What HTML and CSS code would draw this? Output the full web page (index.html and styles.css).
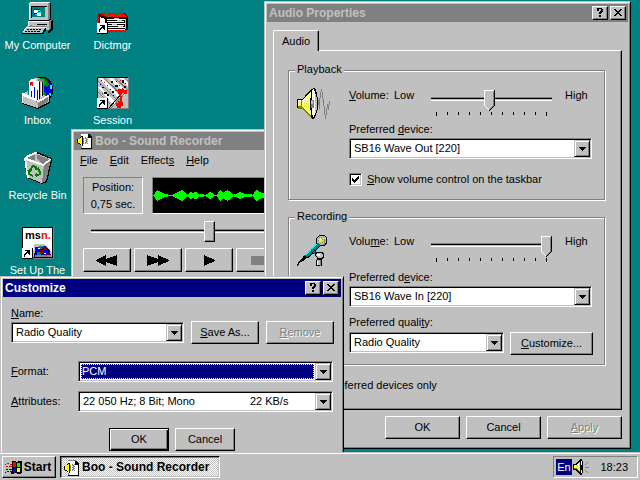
FILE: index.html
```html
<!DOCTYPE html>
<html lang="en">
<head>
<meta charset="utf-8">
<title>Desktop</title>
<link rel="stylesheet" href="styles.css">
</head>
<body>
<svg class="defs" aria-hidden="true">
  <symbol id="help" viewBox="0 0 8 9"><path d="M1 0h5v1h1v3h-1v1h-1v1h-2v-2h1v-1h1v-2h-2v2h-2v-2h0zM3 7h2v2h-2z"/></symbol>
  <symbol id="close" viewBox="0 0 8 7"><path d="M0 0h2v1h1v1h2v-1h1v-1h2v1h-1v1h-1v1h-1v1h1v1h1v1h1v1h-2v-1h-1v-1h-2v1h-1v1h-2v-1h1v-1h1v-1h1v-1h-1v-1h-1v-1h-1z"/></symbol>
  <symbol id="drop" viewBox="0 0 7 4"><path d="M0 0h7v1h-1v1h-1v1h-1v1h-1v-1h-1v-1h-1v-1h-1z"/></symbol>
  <symbol id="arrow" viewBox="0 0 11 11">
    <path fill="#000" d="M0 0h11v11h-11z"/><path fill="#fff" d="M0 0h10v10h-10z"/>
    <path d="M3 2h5v5h-1v-1h-1v-1h-1v1h-1v1h-1v2h-1v-3h1v-1h1v-1h1v-1h-2z"/>
  </symbol>
  <symbol id="wavfile" viewBox="0 0 16 16">
    <path fill="#fff" d="M4 1h8l3 3v11h-11z"/>
    <path fill="#808080" d="M4 0h8v1h-8zM4 13h1v2h-1z"/>
    <path d="M12 1h1v1h1v1h1v13h-11v-1h10v-10h-3v-4h1z"/>
    <path fill="#ff0" d="M1 6h2v-1h1v-1h1v8h-1v-1h-1v-1h-2z"/>
    <path d="M5 3h1v10h-1zM4 3h1v1h-1zM3 4h1v1h-1zM0 6h1v4h-1zM3 11h1v1h-1zM1 10h2v1h-2z"/>
    <path fill="#808080" d="M6 5h1v6h-1zM8 4h1v1h1v-1h1v1h-1v1h1v1h-1v1h1v1h-1v1h1v1h-1v-1h-1v1h-1v-2h1v-1h-1v-1h1v-1h-1z"/>
  </symbol>
</svg>

<main class="desktop">
  <nav class="shortcuts" aria-label="Desktop">
    <a class="shortcut" href="#computer">
      <svg viewBox="0 0 32 32">
        <path fill="#c0c0c0" d="M7 1h19l2-1v17h-2v2h-19z"/><path fill="#fff" d="M7 1l2-1h18l-1 1h-18v17h-1z"/>
        <path fill="#808080" d="M26 1h2v16l-2 2z"/><path d="M28 1h1v17h-2v1h-20v-1h19l2-1zM9 4h16v12h-16z"/>
        <path fill="teal" d="M10 5h14v10h-14z"/><path fill="#c0c0c0" d="M23 5h2v11h-15v-1h13z"/>
        <path fill="#00f" d="M12 7h6v6h-6z"/><path fill="#fff" d="M12 8h4v3h-4zM15 10h4v4h-4z"/><path fill="#0ff" d="M16 8h2v1h-2zM13 12h2v1h-2zM15 10h4v1h-4z"/>
        <path fill="#c0c0c0" d="M6 19h22v9h-25l3-5z"/><path fill="#fff" d="M6 19h22v1h-21v4h-1z"/><path fill="#808080" d="M28 18h2v8l-3 3v-9zM7 24h18v1h-18z"/>
        <path d="M30 18h1v9l-4 4h-1v-1l3-4v-7zM15 22h10v1h-10z"/><path fill="#0f0" d="M8 23h2v1h-2z"/>
        <path fill="#c0c0c0" d="M4 25h19l-3 6h-19z"/><path fill="#fff" d="M4 25h20v1h-20l-2 4h-1z"/>
        <path d="M0 31h22v1h-22zM21 30l3-5v3l-3 4zM5 27h2v1h-2zM8 27h2v1h-2zM11 27h2v1h-2zM14 27h2v1h-2zM17 27h2v1h-2zM3 29h2v1h-2zM6 29h2v1h-2zM9 29h2v1h-2zM12 29h2v1h-2zM15 29h3v1h-3z"/>
      </svg><span>My Computer</span></a>
    <a class="shortcut" href="#dictmgr">
      <svg viewBox="0 0 32 32">
        <path d="M1 11h26l4 3v14h-2v2h-18v-9h-10z"/><path fill="#f00" d="M1 11h25l4 4h-22l-7-3zM8 28h21v2h-19zM0 13h2v8h-2z"/>
        <path fill="#fff" d="M3 15l5 2v11h-1l-4-3zM10 17h18v1h-18zM10 19h17v1h-17zM10 21h18v1h-18zM10 23h17v1h-17zM10 25h18v1h-18zM11 27h17v1h-17z"/>
        <path fill="#c0c0c0" d="M28 17h1v10h-1zM17 16h5v1h-5zM20 18h5v1h-5zM15 22h5v1h-5zM21 24h5v1h-5z"/>
        <path fill="#800000" d="M2 12h2l6 3h-2z"/><path fill="#0a0" d="M8 12h3v1h-3zM14 13h3v1h-3zM19 12h2v1h-2zM22 13h2v1h-2zM11 14h2v1h-2z"/>
        <use href="#arrow" x="0" y="21" width="11" height="11"/>
      </svg><span>Dictmgr</span></a>
    <a class="shortcut" href="#inbox">
      <svg viewBox="0 0 32 32">
        <path d="M16 0h7l3 2 3 3 2 5v6l-2 5-4 3h-9z"/><path fill="#00f" d="M17 1h6l4 3 3 6v5l-3 7h-7z"/>
        <path fill="#008000" d="M17 1h5l3 2 2 4-1 3-4-1-2-3zM21 15h3v4h-3z"/><path fill="#0a0" d="M20 2h2v2h2v3h-2z"/><path fill="#0ff" d="M28 8h2v4h-2zM27 16h2v3h-2z"/>
        <path fill="#808080" d="M13 1h4l5 2v19h-9z"/><path fill="#c0c0c0" d="M12 1h5l-1 3v18h-4zM18 4h1v18h-1z"/>
        <path fill="#fff" d="M7 4l2-2h5v2h3v20h-10zM19 5h1v17h-1z"/><path d="M17 5h1v18h-1zM20 5h1v18h-1z"/>
        <path fill="#f00" d="M8 5h3v4h-1v-1h-1v1h-1z"/><path fill="#00f" d="M9 14h1v7h-1zM12 10h1v11h-1zM15 13h1v10h-1z"/>
        <path fill="#c0c0c0" d="M0 17l6-3v6l9 5 6-7 6 2v5l-12 7-15-6z"/><path fill="#fff" d="M0 16h2l14 7v2l-15-6v7h-1zM16 24l10-6h1v2l-10 6z"/>
        <path fill="#808080" d="M16 26l10-6v5l-10 6z"/><path d="M27 18h1v8l-12 6h-1v-1l12-6zM0 26l15 5v1l-15-5z"/>
      </svg><span>Inbox</span></a>
    <a class="shortcut" href="#session">
      <svg viewBox="0 0 32 32">
        <path d="M0 0h32v32h-32z"/><path fill="#c0c0c0" d="M1 1h30v30h-30z"/><path fill="#808080" d="M31 0h1v32h-32v-1h31z"/>
        <path fill="#fff" d="M1 1h4l21 21v4zM11 1h4l16 14v4zM22 1h4l5 4v4zM1 10h2l15 15v5z"/>
        <path fill="none" stroke="#808080" d="M1 4l21 21M7 1l24 23M18 1l13 12M28 1l3 3M1 15l12 12M14 31l17-18"/>
        <path fill="#c0c0c0" d="M31 14v17h-17z"/>
        <path d="M5 10h2v1h-2zM7 15h3v2h-3zM14 4h2v2h-2zM18 8h3v2h-3zM10 17h2v2h-2zM25 3h2v3h-2zM27 9h2v2h-2zM15 14h2v2h-2z"/>
        <path fill="#f00" d="M7 5h1v1h-1zM10 8h1v1h-1zM22 8h1v1h-1zM25 11h1v1h-1zM5 16h1v1h-1zM16 9h1v1h-1zM23 3h1v1h-1z"/>
        <path fill="#00f" d="M4 3h1v1h-1zM13 12h1v1h-1zM16 18h1v1h-1zM28 6h1v1h-1zM19 4h1v1h-1zM3 7h1v1h-1z"/>
        <path fill="none" stroke="#000" d="M12 31l14-16"/>
        <path fill="#f00" d="M21 12h6v1h3v4h-3v-1h-3v3h1v6h1v4h-2v2h-4v-2h-1v-3h2v-2h2v-5h-1v-2h-1v-3h-3v-1h2z"/>
        <use href="#arrow" x="0" y="21" width="11" height="11"/>
      </svg><span>Session</span></a>
    <a class="shortcut" href="#bin">
      <svg viewBox="0 0 32 32">
        <path d="M14 0h2l14 6v3l-5 21-5 2-15-6-3-19z"/>
        <path fill="#c0c0c0" d="M3 7l11-6 15 6-5 22-5 2-13-6z"/><path fill="#808080" d="M4 6l10-4 13 5-6 6-3-1z"/>
        <path fill="#c0c0c0" d="M13 2h2v5l4 4-1 1-5-2z"/>
        <path fill="#808080" d="M22 13l7-5-5 21-4 2z"/><path fill="#fff" d="M2 6l2-2 9-4h2v1l-10 5 16 6 7-5 1 1-8 6-17-6 3 18h-2z"/>
        <g fill="none" stroke="#008000" stroke-width="2"><path d="M8 18l3-4 3 1 1 3M17 17l1 5-4 2M11 24l-4-2 1-4"/></g>
        <path fill="#008000" d="M12 18h5v-3zM15 21v5l-3-3zM5 18h5l-3 3z"/>
      </svg><span>Recycle Bin</span></a>
    <span></span>
    <a class="shortcut" href="#msn">
      <svg viewBox="0 0 32 32">
        <path fill="#808080" d="M0 0h32v32h-32z"/><path d="M0 0h31v31h-31z"/><path fill="#fff" d="M1 1h29v29h-29z"/>
        <path fill="#c0c0c0" d="M12 17h10l5 4 3 5v4h-19z"/>
        <path fill="#000080" d="M12 30l1-7 4-4h7l4 5 1 6z"/><path fill="#00f" d="M13 20h4v4h-4zM21 23h5v4h-5z"/><path fill="teal" d="M17 19h5v3h-5zM15 25h4v3h-4z"/>
        <path fill="#800000" d="M20 20h5v3h-3v3h-4v-3h2zM24 27h4v3h-4z"/><path fill="#808080" d="M13 28h16v2h-16z"/><path fill="#fff" d="M16 21h2v1h-2zM22 26h2v1h-2z"/>
        <text class="msn" x="3" y="12">ms<tspan fill="#f00">n.</tspan></text>
        <use href="#arrow" x="0" y="21" width="11" height="11"/>
      </svg><span>Set Up The</span></a>
  </nav>

  <section class="window recorder" aria-label="Sound Recorder">
    <header class="titlebar"><svg class="small-icon"><use href="#wavfile"/></svg><h2>Boo - Sound Recorder</h2></header>
    <nav class="menu"><a href="#file"><u>F</u>ile</a><a href="#edit"><u>E</u>dit</a><a href="#effects">Effect<u>s</u></a><a href="#menuhelp"><u>H</u>elp</a></nav>
    <div class="recorder-body">
      <div class="readouts">
        <div class="position"><span>Position:</span><span>0,75 sec.</span></div>
        <div class="wave">
          <svg viewBox="0 0 182 35" width="182" height="35"><g fill="none" stroke="#0f0">
            <path d="M0 17.500h182"/>
            <path stroke-width="3" d="M1 17.500h14M20 17.500h14M35 17.500h11M47 17.500h4M53 17.500h8M64 17.500h16M81 17.500h18M100 17.500h14"/>
            <path stroke-width="5" d="M2 17.500h9M22 17.500h11M36 17.500h9M55 17.500h5M65 17.500h14M84 17.500h7M101 17.500h11"/>
            <path stroke-width="7" d="M2 17.500h7M24 17.500h8M37 17.500h2M41 17.500h3M56 17.500h2M65 17.500h5M71 17.500h7M86 17.500h2M101 17.500h7"/>
            <path stroke-width="9" d="M3 17.500h4M26 17.500h5M66 17.500h3M72 17.500h5M102 17.500h4"/>
            <path stroke-width="11" d="M4 17.500h1M28 17.500h2M67 17.500h1M74 17.500h1M103 17.500h2"/>
          </g></svg>
        </div>
      </div>
      <input class="slider flat" type="range" aria-label="Position" min="0" max="100" value="50">
      <div class="transport">
        <button class="btn" aria-label="Rewind"><svg viewBox="0 0 22 11" width="22" height="11"><path d="M0 5l10-5v4l11-4v11l-11-4v4l-10-5z"/></svg></button>
        <button class="btn" aria-label="Fast forward"><svg viewBox="0 0 22 11" width="22" height="11"><path d="M0 0l11 4v-4l11 5v1l-11 5v-4l-11 4z"/></svg></button>
        <button class="btn" aria-label="Play"><svg viewBox="0 0 11 11" width="11" height="11"><path d="M0 0l11 5v1l-11 5z"/></svg></button>
        <button class="btn" aria-label="Stop" disabled><svg viewBox="0 0 18 9" width="18" height="9"><path fill="#808080" d="M0 0h17v9h-17z"/></svg></button>
        <button class="btn" aria-label="Record"><svg viewBox="0 0 11 11" width="11" height="11"><circle cx="5" cy="5" r="5" fill="#f00"/></svg></button>
      </div>
    </div>
  </section>

  <section class="window audio" aria-label="Audio Properties">
    <header class="titlebar"><h2>Audio Properties</h2>
      <button class="btn cap" aria-label="Help"><svg width="8" height="9"><use href="#help"/></svg></button>
      <button class="btn cap" aria-label="Close"><svg width="8" height="7"><use href="#close"/></svg></button>
    </header>
    <div class="audio-body">
      <button class="tab">Audio</button>
      <div class="page">
        <fieldset>
          <legend>Playback</legend>
          <svg class="device" viewBox="0 0 34 32" width="34" height="32">
            <path d="M0 11h5l3-3 6-7 3-1h1l2 5 1 7v8l-2 7-2 4h-2l-8-8-2-3h-5z"/>
            <path fill="#ff8" d="M1 12h4l9-9v26l-9-9h-4z"/>
            <path fill="#808000" d="M1 18h4l9 10v1h-1l-8-8h-4zM4 12h1v8h-1z"/><path fill="#fff" d="M1 12h3v2h-3zM6 12l5-5v3l-5 5z"/>
            <path fill="#e0e000" d="M8 12h1v1h-1zM10 10h1v1h-1zM7 15h1v1h-1zM9 15h1v1h-1zM11 13h1v1h-1zM11 16h1v1h-1zM9 18h1v1h-1zM7 18h1v1h-1zM11 19h1v1h-1zM12 22h1v1h-1zM2 15h1v1h-1zM2 17h1v1h-1z"/>
            <path fill="#fff" d="M15 4l1-3h1l2 6v16l-2 6h-1l-1-4z"/><path fill="#c0c0c0" d="M18 6h1l1 6v7l-1 6h-1z"/>
            <path d="M13 10h2v12h-2z"/><path fill="#808080" d="M14 12h3v8h-3z"/><path fill="#c0c0c0" d="M14 13h2v3h-2z"/>
            <path fill="none" stroke="#808080" d="M21.500 17v-4l1-1v9M22.500 13l2-12 2 13 2 17 2-15 1 6 1-9"/>
          </svg>
          <div class="controls">
            <div class="volume"><label for="pv"><u>V</u>olume:</label><span>Low</span>
              <div class="scale"><input class="slider" id="pv" type="range" min="0" max="110" value="53">
                <svg width="121" height="4" viewBox="0 0 121 4"><path d="M5 0h1v4h-1zM16 0h1v3h-1zM27 0h1v3h-1zM38 0h1v3h-1zM49 0h1v3h-1zM60 0h1v3h-1zM71 0h1v3h-1zM82 0h1v3h-1zM93 0h1v3h-1zM104 0h1v3h-1zM115 0h1v4h-1z"/></svg></div>
              <span>High</span></div>
            <label class="caption" for="pd">Preferred <u>d</u>evice:</label>
            <div class="combo"><select id="pd"><option>SB16 Wave Out [220]</option></select><span class="drop"><svg width="7" height="4"><use href="#drop"/></svg></span></div>
            <label class="check"><input type="checkbox" checked><span><u>S</u>how volume control on the taskbar</span></label>
          </div>
        </fieldset>
        <fieldset class="recording">
          <legend>Recording</legend>
          <svg class="device" viewBox="0 0 34 32" width="34" height="32">
            <path d="M22 1h5l3 3v5l-3 3h-4l-12 12h-2l-3 3-4 2-1 4h-1l1-5 5-4 1-3 12-12v-4z"/>
            <path fill="#c0c0c0" d="M22 2h5l2 2v5l-3 2h-4l-2-3v-4z"/><path fill="#808080" d="M22 3h1v1h-1zM24 3h1v1h-1zM26 3h1v1h-1zM25 5h1v1h-1zM27 5h1v6h-2v-1h1zM23 9h1v1h-1zM25 8h1v1h-1zM21 6h1v1h-1z"/>
            <path fill="#ff0" d="M23 4h1v1h1v1h-1v2h-1v-1h-1v-2h1zM25 6h1v1h-1z"/><path fill="#fff" d="M24 5h1v1h-1zM26 4h1v1h-1z"/>
            <path fill="teal" d="M18 11l3-2 2 2-11 11-2 1-3-1 1-2z"/><path fill="#0ff" d="M18 10h2l-11 11h-2z"/>
            <path fill="#000" d="M15 15l3 1 2 3-1 2-5-3z"/><path fill="teal" d="M14 15h2l3 4-1 1-3-2z"/>
            <path d="M20 18h5l2 2v4l-2 1v7h-6v-4l1-4-2-2v-3z"/><path fill="#c0c0c0" d="M20 19h4l2 2v2l-2 1h-3l-2-2zM20 26h4v5h-4z"/><path fill="#fff" d="M20 20h3v2h-3zM20 27h1v4h-1z"/><path fill="#808080" d="M23 26h1v6h-1z"/>
          </svg>
          <div class="controls">
            <div class="volume"><label for="rv">Volu<u>m</u>e:</label><span>Low</span>
              <div class="scale"><input class="slider" id="rv" type="range" min="0" max="110" value="110">
                <svg width="121" height="4" viewBox="0 0 121 4"><path d="M5 0h1v4h-1zM16 0h1v3h-1zM27 0h1v3h-1zM38 0h1v3h-1zM49 0h1v3h-1zM60 0h1v3h-1zM71 0h1v3h-1zM82 0h1v3h-1zM93 0h1v3h-1zM104 0h1v3h-1zM115 0h1v4h-1z"/></svg></div>
              <span>High</span></div>
            <label class="caption" for="rd">Preferred d<u>e</u>vice:</label>
            <div class="combo"><select id="rd"><option>SB16 Wave In [220]</option></select><span class="drop"><svg width="7" height="4"><use href="#drop"/></svg></span></div>
            <label class="caption" for="rq">Preferred quali<u>t</u>y:</label>
            <div class="quality">
              <div class="combo"><select id="rq"><option>Radio Quality</option></select><span class="drop"><svg width="7" height="4"><use href="#drop"/></svg></span></div>
              <button class="btn"><span><u>C</u>ustomize...</span></button>
            </div>
          </div>
        </fieldset>
        <label class="check only"><input type="checkbox"><span>Use preferred devices only</span></label>
      </div>
      <footer class="actions"><button class="btn">OK</button><button class="btn">Cancel</button><button class="btn" disabled><span><u>A</u>pply</span></button></footer>
    </div>
  </section>

  <section class="window customize" aria-label="Customize">
    <header class="titlebar active"><h2>Customize</h2>
      <button class="btn cap" aria-label="Help"><svg width="8" height="9"><use href="#help"/></svg></button>
      <button class="btn cap" aria-label="Close"><svg width="8" height="7"><use href="#close"/></svg></button>
    </header>
    <div class="customize-body">
      <label for="name"><u>N</u>ame:</label>
      <div class="name-row">
        <div class="combo"><select id="name"><option>Radio Quality</option></select><span class="drop"><svg width="7" height="4"><use href="#drop"/></svg></span></div>
        <button class="btn"><span><u>S</u>ave As...</span></button>
        <button class="btn" disabled><span><u>R</u>emove</span></button>
      </div>
      <div class="fields">
        <label for="format"><u>F</u>ormat:</label>
        <div class="combo selected"><select id="format"><option>PCM</option></select><span class="drop"><svg width="7" height="4"><use href="#drop"/></svg></span></div>
        <label for="attrs"><u>A</u>ttributes:</label>
        <div class="combo"><select id="attrs"><option>22 050 Hz; 8 Bit; Mono&nbsp;&nbsp;&nbsp;&nbsp;&nbsp;&nbsp;&nbsp;&nbsp;&nbsp;&nbsp;&nbsp;&nbsp;&nbsp;&nbsp;&nbsp;&nbsp;&nbsp;&nbsp;22 KB/s</option></select><span class="drop"><svg width="7" height="4"><use href="#drop"/></svg></span></div>
      </div>
      <footer class="confirm"><button class="btn default">OK</button><button class="btn">Cancel</button></footer>
    </div>
  </section>
</main>

<footer class="taskbar">
  <button class="btn start">
    <svg viewBox="0 0 17 15" width="17" height="15">
      <path d="M7 1h4v1h2v-1h4v11l-1 2h-3l-3-1-3 1h-1v-2h1z"/>
      <path fill="#f00" d="M8 2h3v5h-3zM5 4h2v1h-2zM2 3h2v1h-2zM0 4h1v1h-1zM4 6h3v1h-3zM1 6h2v1h-2z"/><path fill="#0f0" d="M12 3h3v4h-3z"/>
      <path fill="#00f" d="M8 8h3v4h-3zM4 9h3v1h-3zM1 9h2v1h-2zM5 11h2v1h-2zM2 11h2v1h-2zM0 12h1v1h-1z"/><path fill="#ff0" d="M12 8h3v4h-3z"/>
    </svg>Start</button>
  <button class="task"><svg class="small-icon"><use href="#wavfile"/></svg>Boo - Sound Recorder</button>
  <div class="tray"><span class="lang">En</span>
    <svg viewBox="0 0 16 16" width="16" height="16">
      <path d="M0 5h3l4-5h2l1 3v9l-1 4h-2l-4-5h-3z"/><path fill="#ff0" d="M1 6h2l4-4v12l-4-4h-2z"/><path fill="#fff" d="M2 6h1v2h-1zM5 5h1v1h-1zM5 7h1v1h-1zM4 9h1v1h-1zM8 2h1v12h-1z"/><path d="M7 6h2v5h-2z"/><path fill="#808000" d="M1 9h2l4 4v1l-4-4h-2z"/>
      <path fill="#808080" d="M14 3h1v1h-1v1h-1v1h-1v-1h1v-1h1zM12 8h4v1h-4zM12 11h1v1h1v1h1v1h-1v-1h-1v-1h-1z"/>
    </svg>
    <time>18:23</time></div>
</footer>
</body>
</html>
```
FILE: styles.css
```css
* { box-sizing: border-box; }

body {
  margin: 0;
  height: 100vh;
  display: flex;
  flex-direction: column;
  overflow: hidden;
  background: #008080;
  color: #000;
  font: 11px/13px "Liberation Sans", Arial, sans-serif;
}

svg { display: block; flex: none; shape-rendering: crispEdges; }
.defs { position: absolute; width: 0; height: 0; }
a { color: inherit; text-decoration: none; }
button, select, input { font: inherit; color: inherit; margin: 0; padding: 0; }
h2 { margin: 0; flex: 1; font-size: 12px; line-height: 14px; }

.desktop { position: relative; flex: 1; min-height: 0; overflow: hidden; }

.shortcuts {
  display: grid;
  grid-template-columns: repeat(2, 75px);
  grid-auto-rows: 75px;
  padding-top: 2px;
}
.shortcut {
  display: flex;
  flex-direction: column;
  align-items: center;
  gap: 5px;
  color: #fff;
  text-align: center;
}
.shortcut svg { width: 32px; height: 32px; }
.msn { font: bold 11px "Liberation Sans", Arial, sans-serif; }

/* Windows */
.window {
  position: absolute;
  padding: 2px;
  background: #c0c0c0;
  border: 1px solid;
  border-color: #c0c0c0 #000 #000 #c0c0c0;
  box-shadow: inset 1px 1px #fff, inset -1px -1px #808080;
}
.recorder { left: 71px; top: 129px; width: 276px; }
.audio { left: 264px; top: 1px; width: 367px; }
.customize { left: 0; top: 276px; width: 344px; }

.titlebar {
  display: flex;
  align-items: center;
  gap: 2px;
  height: 18px;
  padding: 0 2px;
  background: #808080;
  color: #c0c0c0;
}
.titlebar.active { background: #000080; color: #fff; }
.small-icon { width: 16px; height: 16px; }

.btn {
  display: flex;
  align-items: center;
  justify-content: center;
  height: 23px;
  background: #c0c0c0;
  border: 1px solid;
  border-color: #fff #000 #000 #fff;
  border-radius: 0;
  box-shadow: inset -1px -1px #808080;
  color: #000;
}
.btn:disabled { color: #808080; text-shadow: 1px 1px #fff; }
.btn.cap { width: 16px; height: 14px; padding: 0 1px 1px 0; }
.btn.default {
  border-color: #000;
  box-shadow: inset 1px 1px #fff, inset -1px -1px #000, inset -2px -2px #808080;
}

/* Drop-down lists */
.combo {
  position: relative;
  height: 21px;
  padding: 1px;
  background: #fff;
  border: 1px solid;
  border-color: #808080 #fff #fff #808080;
  box-shadow: inset 1px 1px #000, inset -1px -1px #c0c0c0;
}
.combo select {
  display: block;
  width: 100%;
  height: 17px;
  padding: 0 18px 0 3px;
  appearance: none;
  border: 0;
  border-radius: 0;
  background: transparent;
}
.combo.selected select {
  width: calc(100% - 18px);
  height: 15px;
  margin: 1px;
  padding: 0 1px;
  background: #000080;
  color: #fff;
  outline: 1px dotted #ff8;
  outline-offset: -1px;
}
.drop {
  position: absolute;
  top: 1px;
  right: 1px;
  display: flex;
  align-items: center;
  justify-content: center;
  width: 16px;
  height: 17px;
  background: #c0c0c0;
  border: 1px solid;
  border-color: #c0c0c0 #000 #000 #c0c0c0;
  box-shadow: inset 1px 1px #fff, inset -1px -1px #808080;
  pointer-events: none;
}

/* Sliders */
.slider {
  display: block;
  width: 100%;
  height: 21px;
  appearance: none;
  background: transparent;
}
.slider::-webkit-slider-runnable-track {
  height: 21px;
  background:
    linear-gradient(#808080 1px, #000 1px 2px, #c0c0c0 2px 3px, #fff 3px) 0 7px / 100% 4px no-repeat;
}
.slider::-webkit-slider-thumb {
  appearance: none;
  width: 11px;
  height: 21px;
  background: url("data:image/svg+xml,%3Csvg xmlns='http://www.w3.org/2000/svg' width='11' height='21' shape-rendering='crispEdges'%3E%3Cpath fill='%23c0c0c0' d='M0 0h10v16l-5 5-5-5z'/%3E%3Cpath fill='%23fff' d='M0 0h10v1h-9v15h1v1h1v1h1v1h1v1h-1v-1h-1v-1h-1v-1h-1v-1h-1z'/%3E%3Cpath fill='%23808080' d='M9 1h1v15h-1v1h-1v1h-1v1h-1v1h-1v-1h1v-1h1v-1h1v-1h1z'/%3E%3Cpath d='M10 0h1v16h-1v1h-1v1h-1v1h-1v1h-1v1h-1v-1h1v-1h1v-1h1v-1h1v-1h1z'/%3E%3C/svg%3E");
}
.slider.flat::-webkit-slider-runnable-track { background-position: 0 8px; }
.slider.flat::-webkit-slider-thumb {
  background: #c0c0c0;
  border: 1px solid;
  border-color: #fff #000 #000 #fff;
  box-shadow: inset -1px -1px #808080;
}

/* Tick boxes */
.check { display: flex; align-items: center; gap: 5px; }
.check input {
  appearance: none;
  width: 13px;
  height: 13px;
  background: #fff;
  border: 1px solid;
  border-color: #808080 #fff #fff #808080;
  box-shadow: inset 1px 1px #000, inset -1px -1px #c0c0c0;
}
.check input:checked {
  background: #fff url("data:image/svg+xml,%3Csvg xmlns='http://www.w3.org/2000/svg' width='7' height='7' shape-rendering='crispEdges'%3E%3Cpath d='M0 2h1v1h1v1h1v-1h1v-1h1v-1h1v-1h1v3h-1v1h-1v1h-1v1h-1v1h-1v-1h-1v-1h-1z'/%3E%3C/svg%3E") 2px 2px no-repeat;
}

/* Sound Recorder */
.recorder .titlebar { padding-left: 3px; }
.menu { display: flex; align-items: center; gap: 12px; height: 20px; padding: 0 6px; }
.recorder-body { padding: 7px 9px 9px; }
.readouts { display: flex; gap: 9px; height: 37px; }
.position, .wave {
  border: 1px solid;
  border-color: #808080 #fff #fff #808080;
}
.position {
  display: flex;
  flex-direction: column;
  width: 60px;
  padding-top: 1px;
  line-height: 17px;
  text-align: center;
}
.wave { flex: 1; min-width: 0; overflow: hidden; background: #000; }
.recorder .slider { width: calc(100% - 16px); margin: 7px 8px 6px; }
.transport { display: grid; grid-template-columns: repeat(5, 1fr); gap: 3px; }
.transport .btn { height: 24px; }

/* Audio Properties */
.audio-body { padding: 8px 6px 7px; }
.tab {
  position: relative;
  z-index: 1;
  display: block;
  width: 46px;
  height: 21px;
  margin-bottom: -1px;
  background: #c0c0c0;
  border: 1px solid;
  border-color: #fff #000 #c0c0c0 #fff;
  border-bottom: 0;
  border-radius: 2px 2px 0 0;
  box-shadow: inset -1px 0 #808080;
}
.page {
  padding: 12px 16px 17px 14px;
  border: 1px solid;
  border-color: #fff #000 #000 #fff;
  box-shadow: inset -1px -1px #808080;
}
fieldset {
  display: flex;
  gap: 18px;
  min-width: 0;
  margin: 0;
  padding: 11px 12px 13px 8px;
  border: 1px solid #808080;
  box-shadow: 1px 1px #fff, inset 1px 1px #fff;
}
legend { height: 14px; margin-left: -2px; padding: 0 2px; background: #c0c0c0; }
.recording { margin-top: 10px; padding-top: 10px; padding-bottom: 9px; }
.controls { flex: 1; min-width: 0; padding-top: 1px; }
.volume {
  display: grid;
  grid-template-columns: 45px 37px 1fr 27px;
  height: 27px;
}
.scale { width: 121px; padding-top: 1px; }
.scale svg { margin-top: 1px; }
.caption { display: block; margin: 7px 0 2px; }
.recording .caption { margin-top: 9px; }
.controls .check { margin-top: 14px; }
.quality { display: flex; gap: 6px; margin: 3px -1px 0 0; }
.quality .combo { flex: 1; }
.quality .btn { width: 83px; }
.only { margin-top: 14px; }
.actions { display: grid; grid-template-columns: repeat(3, 75px); justify-content: end; gap: 6px; margin-top: 6px; }

/* Customize */
.customize-body { padding: 10px 7px 8px 8px; }
.name-row {
  display: grid;
  grid-template-columns: 1fr 68px 68px;
  align-items: center;
  gap: 7px;
  margin-top: 1px;
}
.customize-body label { display: block; }
.fields {
  display: grid;
  grid-template-columns: 67px 1fr;
  align-items: center;
  row-gap: 9px;
  margin: 17px 1px 16px 0;
}
.confirm { display: grid; grid-template-columns: 60px 60px; justify-content: center; gap: 6px; margin-right: 1px; }

/* Taskbar */
.taskbar {
  display: flex;
  gap: 4px;
  height: 28px;
  padding: 4px 2px 2px;
  background: #c0c0c0;
  box-shadow: inset 0 1px #c0c0c0, inset 0 2px #fff;
}
.start, .task { height: 22px; font-size: 12px; font-weight: bold; }
.start { width: 54px; gap: 2px; padding-right: 2px; }
.task {
  display: flex;
  align-items: center;
  gap: 2px;
  width: 160px;
  padding: 1px 3px 0;
  background: repeating-conic-gradient(#fff 0 25%, #c0c0c0 0 50%) 0 0 / 2px 2px;
  border: 1px solid;
  border-color: #000 #fff #fff #000;
  box-shadow: inset 1px 1px #808080, inset -1px -1px #c0c0c0;
}
.tray {
  display: flex;
  align-items: center;
  width: 85px;
  height: 22px;
  margin-left: auto;
  padding: 0 9px 0 2px;
  border: 1px solid;
  border-color: #808080 #fff #fff #808080;
}
.lang { width: 16px; margin-right: 1px; line-height: 16px; background: #000080; color: #fff; text-align: center; }
.tray time { margin-left: auto; }
```
